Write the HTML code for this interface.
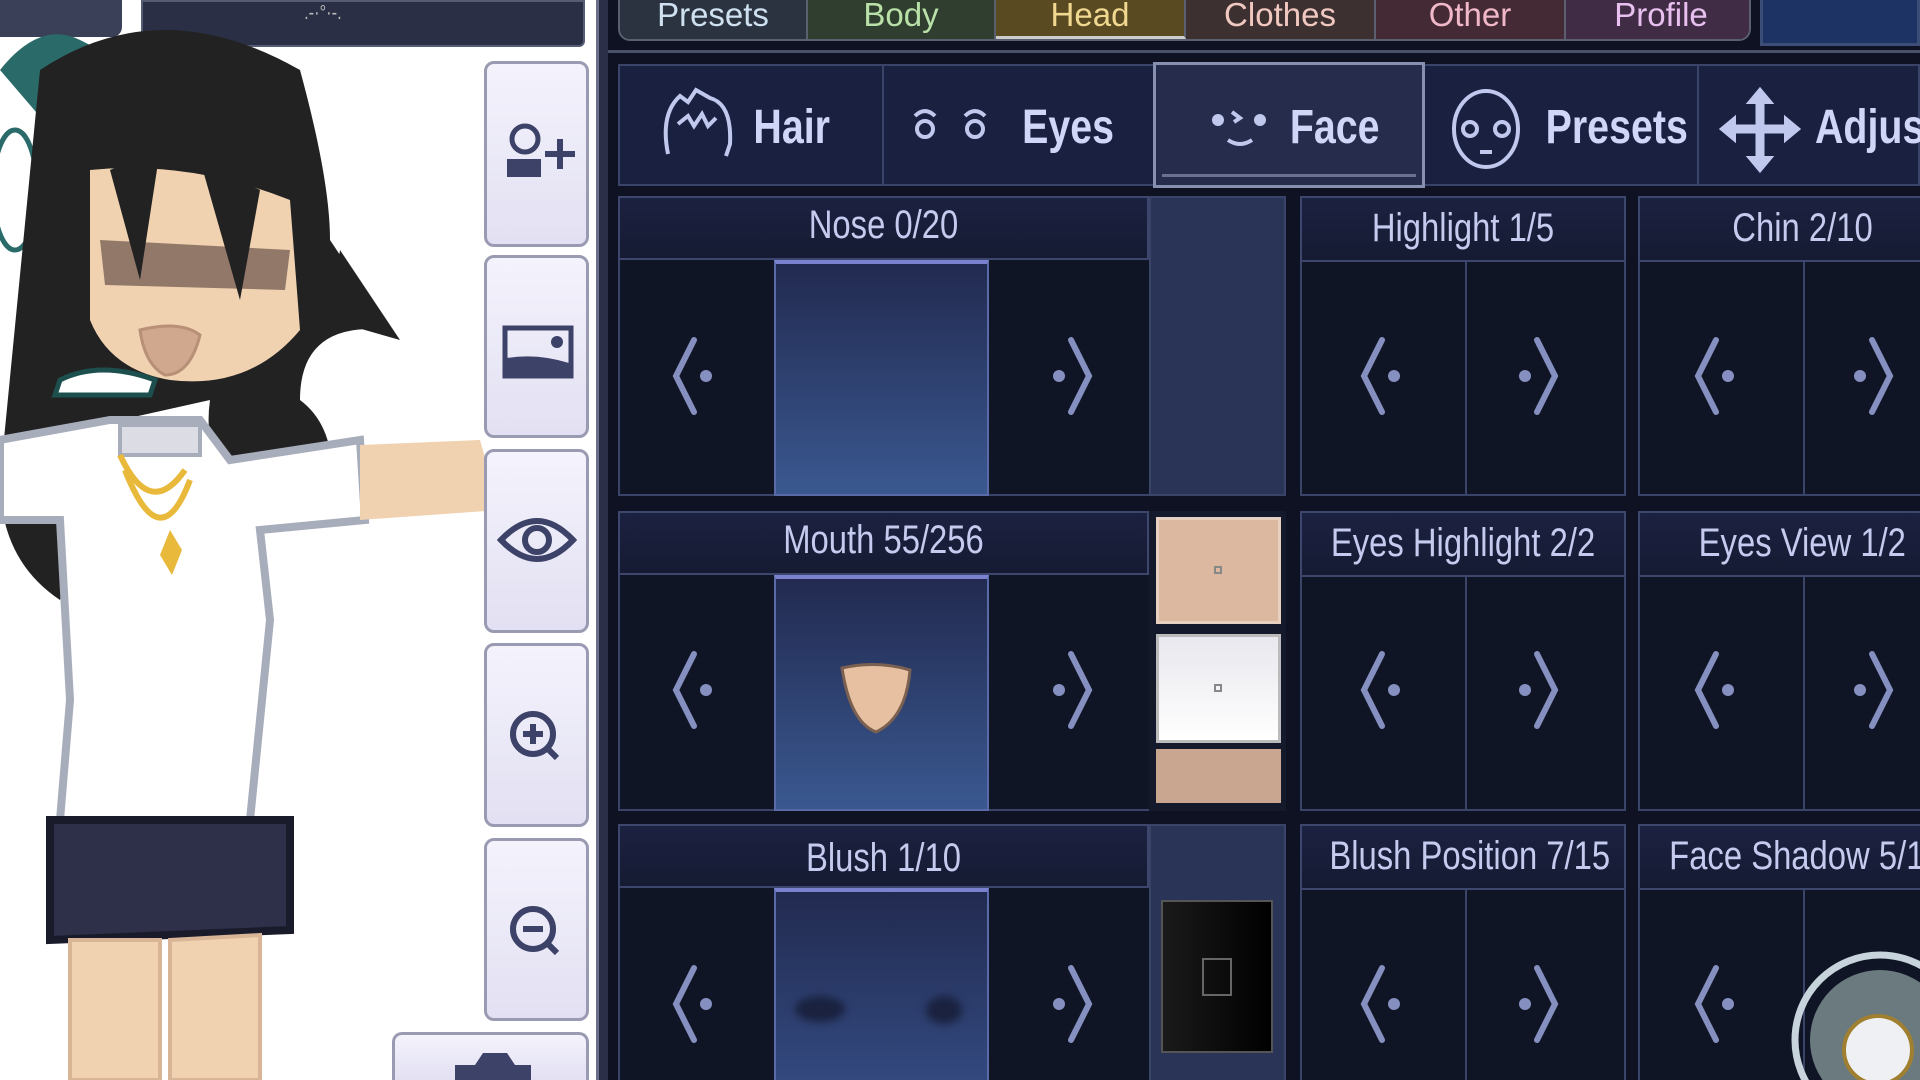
<!DOCTYPE html>
<html style="width:1920px;height:1080px;overflow:hidden"><head><meta charset="utf-8"><style>
*{margin:0;padding:0;box-sizing:border-box}
body{width:1920px;height:1080px;overflow:hidden;background:#0f1222;position:relative;font-family:"Liberation Sans Narrow","Liberation Sans",sans-serif}
.a{position:absolute}
.t{position:absolute;color:#c4cbee;text-align:center;white-space:nowrap;transform:scaleX(.82)}
.cell{position:absolute;background:#101526;border:2px solid #3a4468}
.hdr{position:absolute;background:linear-gradient(#1b2140,#161b33);border:2px solid #3d476d}
.btn{position:absolute;left:484px;width:105px;border:3px solid #9a9bb2;border-radius:10px;background:linear-gradient(#f4f3fc,#e2e0f2)}
.tab{position:absolute;top:0;height:39px;border-right:2px solid #5a6070;font-size:33px;text-align:center;line-height:30px}
</style></head><body>
<div class="a" style="left:0;top:0;width:596px;height:1080px;background:#fff"></div>
<div class="a" style="left:0;top:0;width:122px;height:37px;background:#3a4058;border-radius:0 0 10px 0"></div>
<div class="a" style="left:141px;top:0;width:444px;height:47px;background:#2a2f45;border:2px solid #555c74;border-radius:0 0 6px 6px"></div>
<div class="t" style="left:300px;top:2px;font-size:20px;color:#bbb">.-·°·-.</div>
<svg class="a" style="left:0;top:0" width="596" height="1080">
 <path d="M0 70 Q40 20 80 40 L120 60 L60 140 Z" fill="#2a6b6a"/>
 <ellipse cx="15" cy="190" rx="22" ry="60" fill="#fff" stroke="#2a6b6a" stroke-width="5"/>
 <path d="M40 70 Q160 -10 300 70 Q330 180 330 240 L390 330 Q300 320 300 400 Q340 430 330 500 L260 520 Q200 470 210 400 L120 420 L60 600 Q0 560 0 480 Z" fill="#222"/>
 <path d="M90 170 Q190 160 290 200 L300 330 Q250 390 170 380 Q110 370 90 320 Z" fill="#f0d2b0"/>
 <path d="M100 240 L290 250 L285 290 L105 285 Z" fill="#7a6258" opacity=".8"/>
 <path d="M110 170 L160 150 L140 280 Z M200 160 L260 190 L240 300 Z" fill="#222"/>
 <path d="M140 330 Q180 320 200 335 Q190 375 165 375 Q145 365 140 330 Z" fill="#cfa88e" stroke="#b89078" stroke-width="3"/>
 <path d="M60 380 Q100 360 155 380 L150 395 L55 395 Z" fill="#fff" stroke="#1d4f4e" stroke-width="5"/>
 <path d="M110 420 L200 420 L230 460 L360 440 L365 520 L260 530 L270 620 L250 820 L60 820 L70 700 L60 520 L0 520 L0 440 Z" fill="#fff" stroke="#a8adbb" stroke-width="8"/>
 <rect x="120" y="425" width="80" height="30" fill="#dcdde4" stroke="#a8adbb" stroke-width="4"/>
 <path d="M120 455 Q150 520 185 470 M125 470 Q160 560 190 480" fill="none" stroke="#e8b93a" stroke-width="6"/>
 <path d="M170 530 l12 20 l-10 25 l-12 -20 z" fill="#e8b93a"/>
 <path d="M360 445 L480 440 L500 510 L360 520 Z" fill="#f0d2b0"/>
 <path d="M50 820 L290 820 L290 930 L50 940 Z" fill="#2e3049" stroke="#1a1b2a" stroke-width="8"/>
 <path d="M70 940 L160 940 L160 1080 L70 1080 Z M170 940 L260 935 L260 1080 L170 1080 Z" fill="#f0d2b0" stroke="#d7b596" stroke-width="4"/>
 <path d="M340 250 L400 340 L330 320 Z" fill="#222"/>
</svg>
<div class="btn" style="top:61px;height:186px"><svg width="99" height="180"><circle cx="38" cy="75" r="13" fill="none" stroke="#3c4268" stroke-width="5"/><rect x="20" y="95" width="34" height="18" fill="#3c4268"/><path d="M58 90 H88 M73 75 V105" stroke="#3c4268" stroke-width="6"/></svg></div>
<div class="btn" style="top:255px;height:183px"><svg width="99" height="177"><rect x="18" y="70" width="66" height="48" fill="none" stroke="#3c4268" stroke-width="5"/><path d="M20 116 L20 100 Q50 95 82 105 L82 116Z" fill="#3c4268"/><circle cx="70" cy="84" r="6" fill="#3c4268"/></svg></div>
<div class="btn" style="top:449px;height:184px"><svg width="99" height="178"><path d="M14 88 Q50 50 86 88 Q50 126 14 88Z" fill="none" stroke="#3c4268" stroke-width="6"/><circle cx="50" cy="88" r="12" fill="none" stroke="#3c4268" stroke-width="6"/></svg></div>
<div class="btn" style="top:643px;height:184px"><svg width="99" height="178"><circle cx="46" cy="88" r="20" fill="none" stroke="#3c4268" stroke-width="6"/><path d="M36 88 H56 M46 78 V98 M60 102 L70 112" stroke="#3c4268" stroke-width="6"/></svg></div>
<div class="btn" style="top:838px;height:183px"><svg width="99" height="177"><circle cx="46" cy="88" r="20" fill="none" stroke="#3c4268" stroke-width="6"/><path d="M36 88 H56 M60 102 L70 112" stroke="#3c4268" stroke-width="6"/></svg></div>
<div class="btn" style="left:392px;width:197px;top:1032px;height:48px;border-bottom:0;border-radius:10px 10px 0 0;overflow:hidden"><svg width="191" height="45"><path d="M60 45 L60 30 L80 30 L88 18 L112 18 L120 30 L136 30 L136 45Z" fill="#3c4268"/></svg></div>
<div class="a" style="left:596px;top:0;width:12px;height:1080px;background:#2b3048;border-left:3px solid #6b7088"></div>
<div class="a" style="left:618px;top:0;width:1133px;height:41px;border:2px solid #5a6070;border-top:0;border-radius:0 0 12px 12px;overflow:hidden">
 <div class="tab" style="left:0;width:188px;background:#2b3340;color:#cfe0f0">Presets</div>
 <div class="tab" style="left:188px;width:188px;background:#2f3e2e;color:#b9e0a8">Body</div>
 <div class="tab" style="left:376px;width:190px;background:#5a4a22;color:#f0d890;border-bottom:3px solid #ccc">Head</div>
 <div class="tab" style="left:566px;width:190px;background:#3c3030;color:#f0c8c0">Clothes</div>
 <div class="tab" style="left:756px;width:190px;background:#432a34;color:#f0b8c8">Other</div>
 <div class="tab" style="left:946px;width:190px;background:#402c44;color:#e8c0f0;border-right:0">Profile</div>
</div>
<div class="a" style="left:1760px;top:0;width:160px;height:46px;background:#1c3364;border:3px solid #3c4d78;border-top:0"></div>
<div class="a" style="left:608px;top:50px;width:1312px;height:3px;background:#4a5068"></div>
<div class="a" style="left:618px;top:64px;width:1302px;height:122px;background:#1a2040;border:2px solid #3a4468"></div>
<div class="a" style="left:882px;top:66px;width:2px;height:118px;background:#3a4468"></div>
<div class="a" style="left:1697px;top:66px;width:2px;height:118px;background:#3a4468"></div>
<div class="a" style="left:1153px;top:62px;width:272px;height:126px;background:#262d4c;border:3px solid #8790b0"><div class="a" style="left:6px;bottom:8px;width:254px;height:3px;background:#6a7290"></div></div>
<svg class="a" style="left:660px;top:84px" width="1260" height="90" fill="none" stroke="#c0c8ee" stroke-width="4">
 <path d="M8 70 Q0 30 20 12 L28 18 L36 6 L50 14 Q72 20 70 60 L66 72 M18 40 L28 32 L34 42 L42 30 L48 42 L56 34"/>
 <path d="M255 32 Q265 22 275 32 M305 32 Q315 22 325 32"/><circle cx="265" cy="45" r="8"/><circle cx="315" cy="45" r="8"/>
 <circle cx="558" cy="36" r="4" fill="#c0c8ee"/><circle cx="600" cy="36" r="4" fill="#c0c8ee"/><path d="M572 28 L580 34 L574 38 M568 56 Q580 64 592 56"/>
 <ellipse cx="826" cy="45" rx="32" ry="38"/><circle cx="810" cy="45" r="7"/><circle cx="842" cy="45" r="7"/><path d="M820 68 H832"/>
 <path d="M1100 14 V80 M1070 45 H1130" stroke-width="9"/><path d="M1090 18 L1100 6 L1110 18 Z M1090 74 L1100 86 L1110 74 Z M1074 35 L1062 45 L1074 55Z M1126 35 L1138 45 L1126 55Z" fill="#c0c8ee"/>
</svg>
<div class="t" style="left:745px;top:100px;font-size:48px;color:#d0d6f8;font-weight:bold">Hair</div>
<div class="t" style="left:1012px;top:100px;font-size:48px;color:#d0d6f8;font-weight:bold">Eyes</div>
<div class="t" style="left:1280px;top:100px;font-size:48px;color:#d0d6f8;font-weight:bold">Face</div>
<div class="t" style="left:1530px;top:100px;font-size:48px;color:#d0d6f8;font-weight:bold">Presets</div>
<div class="t" style="left:1815px;top:100px;font-size:48px;color:#d0d6f8;font-weight:bold;transform-origin:left;transform:scaleX(.82)">Adjust</div>

<div class="a" style="left:618px;top:196px;width:668px;height:300px;border:2px solid #3a4468;background:#101526"></div>
<div class="a" style="left:618px;top:511px;width:668px;height:300px;border:2px solid #3a4468;background:#101526"></div>
<div class="a" style="left:618px;top:824px;width:668px;height:260px;border:2px solid #3a4468;background:#101526"></div>
<div class="hdr" style="left:618px;top:196px;width:531px;height:64px"></div>
<div class="hdr" style="left:618px;top:511px;width:531px;height:64px"></div>
<div class="hdr" style="left:618px;top:824px;width:531px;height:64px"></div>
<div class="a" style="left:1149px;top:196px;width:137px;height:300px;background:#2a3456;border:2px solid #3a4468"></div>
<div class="a" style="left:1149px;top:824px;width:137px;height:260px;background:#2a3456;border:2px solid #3a4468"></div>
<div class="a" style="left:1149px;top:511px;width:137px;height:300px;background:#141a2c"></div>
<div class="a" style="left:1156px;top:517px;width:125px;height:107px;background:#dcb8a0;border:3px solid #e8d0c0"></div>
<div class="a" style="left:1156px;top:634px;width:125px;height:109px;background:linear-gradient(#e8e8ee,#fff);border:3px solid #bbb"></div>
<div class="a" style="left:1156px;top:749px;width:125px;height:54px;background:#c8a690"></div>
<div class="a" style="left:1214px;top:566px;width:8px;height:8px;border:2px solid #888"></div>
<div class="a" style="left:1214px;top:684px;width:8px;height:8px;border:2px solid #888"></div>
<div class="a" style="left:1161px;top:900px;width:112px;height:153px;background:linear-gradient(90deg,#1a1a1a,#000);border:2px solid #555"></div>
<div class="a" style="left:1202px;top:958px;width:30px;height:38px;border:2px solid #666"></div>
<div class="a" style="left:774px;top:260px;width:215px;height:236px;background:linear-gradient(#222a50,#3a5890);border:2px solid #5a6aa8;border-top:4px solid #7a82d0"></div>
<div class="a" style="left:774px;top:575px;width:215px;height:236px;background:linear-gradient(#222a50,#3a5890);border:2px solid #5a6aa8;border-top:4px solid #7a82d0"></div>
<div class="a" style="left:774px;top:888px;width:215px;height:200px;background:linear-gradient(#222a50,#334a80);border:2px solid #5a6aa8;border-top:4px solid #7a82d0"></div>
<svg class="a" style="left:836px;top:660px" width="80" height="80"><path d="M6 8 Q40 0 74 10 Q70 58 40 72 Q14 62 6 8Z" fill="#e6c0a0" stroke="#7a6050" stroke-width="3"/></svg>
<div class="a" style="left:795px;top:996px;width:50px;height:26px;border-radius:50%;background:#1a2240;filter:blur(4px)"></div>
<div class="a" style="left:926px;top:996px;width:36px;height:28px;border-radius:50%;background:#1a2240;filter:blur(4px)"></div>
<div class="t" style="left:618px;width:531px;top:203px;font-size:40px">Nose 0/20</div>
<div class="t" style="left:618px;width:531px;top:518px;font-size:40px">Mouth 55/256</div>
<div class="t" style="left:618px;width:531px;top:836px;font-size:40px">Blush 1/10</div>

<div class="cell" style="left:1300px;top:196px;width:326px;height:300px"></div>
<div class="cell" style="left:1300px;top:511px;width:326px;height:300px"></div>
<div class="cell" style="left:1300px;top:824px;width:326px;height:260px"></div>
<div class="cell" style="left:1638px;top:196px;width:290px;height:300px"></div>
<div class="cell" style="left:1638px;top:511px;width:290px;height:300px"></div>
<div class="cell" style="left:1638px;top:824px;width:290px;height:260px"></div>
<div class="hdr" style="left:1300px;top:196px;width:326px;height:66px"></div>
<div class="hdr" style="left:1300px;top:511px;width:326px;height:66px"></div>
<div class="hdr" style="left:1300px;top:824px;width:326px;height:66px"></div>
<div class="hdr" style="left:1638px;top:196px;width:290px;height:66px"></div>
<div class="hdr" style="left:1638px;top:511px;width:290px;height:66px"></div>
<div class="hdr" style="left:1638px;top:824px;width:290px;height:66px"></div>
<div class="a" style="left:1465px;top:262px;width:2px;height:234px;background:#3a4468"></div>
<div class="a" style="left:1465px;top:577px;width:2px;height:234px;background:#3a4468"></div>
<div class="a" style="left:1465px;top:890px;width:2px;height:190px;background:#3a4468"></div>
<div class="a" style="left:1803px;top:262px;width:2px;height:234px;background:#3a4468"></div>
<div class="a" style="left:1803px;top:577px;width:2px;height:234px;background:#3a4468"></div>
<div class="a" style="left:1803px;top:890px;width:2px;height:190px;background:#3a4468"></div>
<div class="t" style="left:1300px;width:326px;top:206px;font-size:40px">Highlight 1/5</div>
<div class="t" style="left:1300px;width:326px;top:521px;font-size:40px">Eyes Highlight 2/2</div>
<div class="t" style="left:1300px;width:326px;top:834px;font-size:40px">Blush Position 7/15</div>
<div class="t" style="left:1638px;width:326px;top:206px;font-size:40px;text-align:left;padding-left:115px;transform-origin:left">Chin 2/10</div>
<div class="t" style="left:1638px;width:326px;top:521px;font-size:40px;text-align:left;padding-left:74px;transform-origin:left">Eyes View 1/2</div>
<div class="t" style="left:1638px;width:400px;top:834px;font-size:40px;text-align:left;padding-left:38px;transform-origin:left">Face Shadow 5/16</div>

<svg class="a" style="left:0;top:0" width="1920" height="1080" fill="none" stroke="#8590c0" stroke-width="6" stroke-linecap="round">
<defs>
<g id="L"><path d="M2 -36 L-16 0 L2 36"/><circle cx="14" cy="0" r="6" fill="#8590c0" stroke="none"/></g>
<g id="R"><path d="M-2 -36 L16 0 L-2 36"/><circle cx="-14" cy="0" r="6" fill="#8590c0" stroke="none"/></g>
</defs>
<use href="#L" x="692" y="376"/><use href="#R" x="1073" y="376"/>
<use href="#L" x="692" y="690"/><use href="#R" x="1073" y="690"/>
<use href="#L" x="692" y="1004"/><use href="#R" x="1073" y="1004"/>
<use href="#L" x="1380" y="376"/><use href="#R" x="1539" y="376"/>
<use href="#L" x="1380" y="690"/><use href="#R" x="1539" y="690"/>
<use href="#L" x="1380" y="1004"/><use href="#R" x="1539" y="1004"/>
<use href="#L" x="1714" y="376"/><use href="#R" x="1874" y="376"/>
<use href="#L" x="1714" y="690"/><use href="#R" x="1874" y="690"/>
<use href="#L" x="1714" y="1004"/>
</svg>
<svg class="a" style="left:1790px;top:945px" width="130" height="135"><circle cx="90" cy="95" r="85" fill="none" stroke="#c8d4dc" stroke-width="7"/><circle cx="90" cy="95" r="70" fill="#6b7a7e"/><circle cx="88" cy="105" r="34" fill="#eef0f4" stroke="#a08030" stroke-width="4"/></svg>
</body></html>
